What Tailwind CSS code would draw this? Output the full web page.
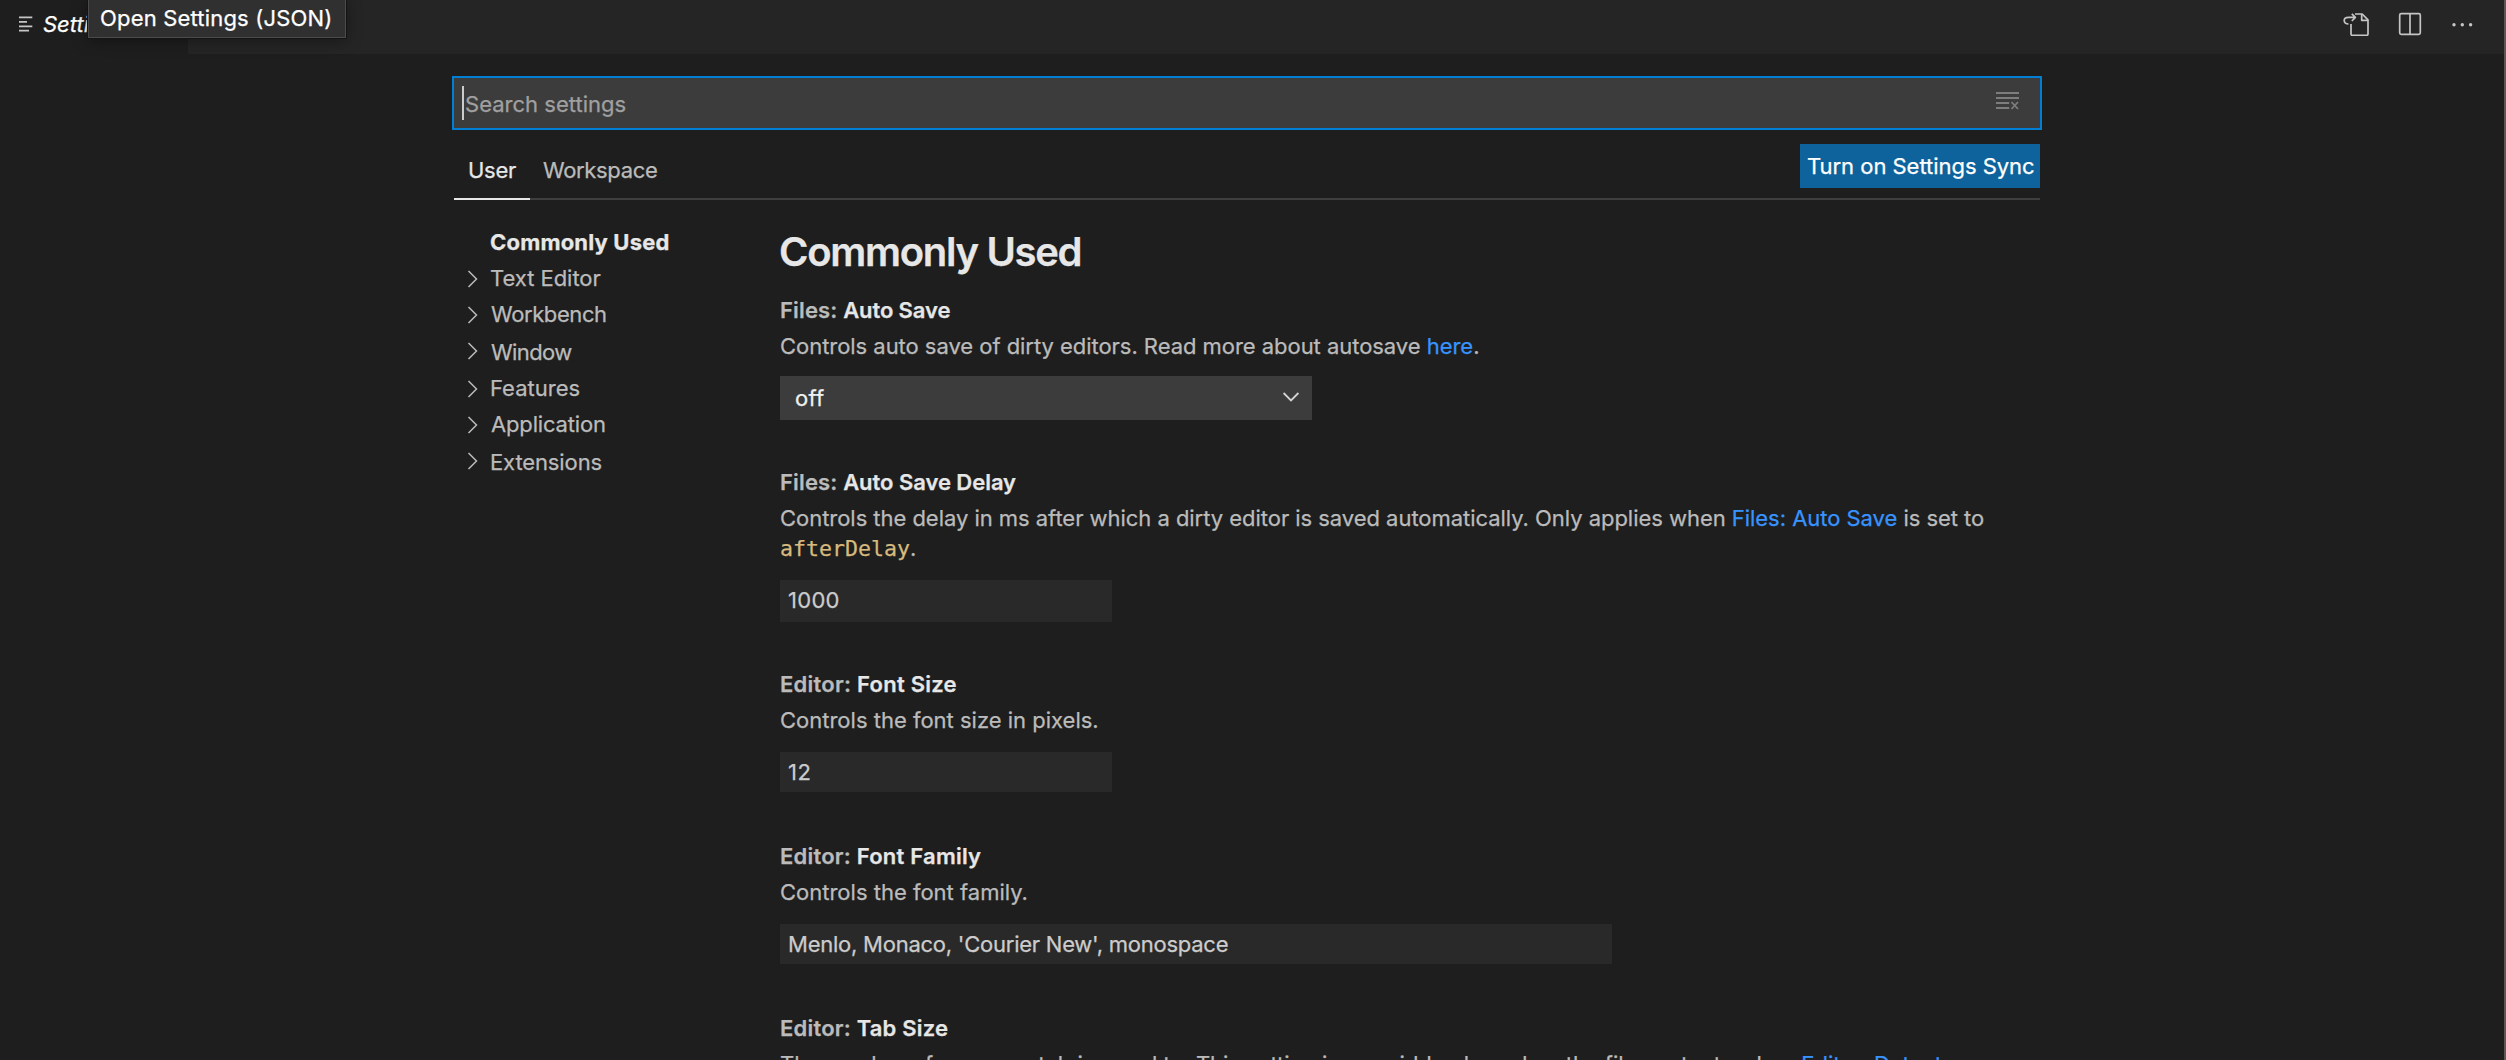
<!DOCTYPE html>
<html lang="en">
<head>
<meta charset="utf-8">
<title>Settings</title>
<script src="https://cdn.jsdelivr.net/npm/@tailwindcss/browser@4"></script>
</head>
<body class="relative flex h-[1060px] w-[2506px] flex-col overflow-hidden border-r-2 border-[#5a5955] bg-[#1e1e1e] font-['Inter',sans-serif] text-[22px] leading-9 text-[#bbbbbb] [-webkit-text-stroke:0.25px]">

<!-- Tab bar -->
<header class="flex h-[54px] shrink-0 justify-between bg-[#252526]">
  <div class="flex h-full w-[188px] items-center gap-[10px] bg-[#1e1e1e] pb-[6px] pl-[18px]">
    <svg class="h-4 w-[15px] shrink-0" viewBox="0 0 15 16" fill="none" stroke="#c5c5c5" stroke-width="1.8"><path d="M1 1.3h13.3M1 5.8h8M1 10.3h13.3M1 14.7h10"/></svg>
    <span class="text-white italic">Settings</span>
  </div>
  <div class="flex pr-[30px]">
    <svg class="mt-3 h-6 w-7" viewBox="0 0 28 24" fill="none" stroke="#c5c5c5" stroke-width="1.7" stroke-linejoin="round">
      <path d="M9 12v10q0 1.3 1.3 1.3h14.4q1.3 0 1.3-1.3V7.8l-5.8-5.8H13"/><path d="M19.700 2v6.300H26"/>
      <path d="M6.500 12C3.800 12 2.200 10.600 2.200 8.600S3.800 5.400 6.500 5.400h6.200M9.800 1.800l3.600 3.600-3.600 3.600"/>
    </svg>
    <svg class="mt-3 ml-7 h-6 w-6" viewBox="0 0 24 24" fill="none" stroke="#c5c5c5" stroke-width="1.7"><rect x="1.700" y="1.700" width="20.600" height="20.600" rx="1.500"/><path d="M12 2v20"/></svg>
    <svg class="mt-3 ml-7 h-6 w-6" viewBox="0 0 24 24" fill="#c5c5c5"><circle cx="4" cy="12.700" r="1.700"/><circle cx="12.300" cy="12.700" r="1.700"/><circle cx="20.600" cy="12.700" r="1.700"/></svg>
  </div>
</header>

<div class="absolute -top-px left-[88px] h-[39px] w-[258px] border border-[#4b4b4b] bg-[#303031] pl-[11px] leading-[37px] tracking-[0.18px] text-white shadow-[0_0_0_1px_#141414,0_2px_16px_rgba(0,0,0,0.4)]">Open Settings (JSON)</div>

<main class="ml-[452px] flex w-[1590px] flex-col pt-[22px]">
  <!-- Search -->
  <div class="flex h-[54px] items-center justify-between border-2 border-[#007fd4] bg-[#3c3c3c] pr-[21px] pl-2">
    <div class="flex items-center">
      <span class="h-[34px] w-[2px] bg-[#cccccc]"></span>
      <span class="pt-[2px] pl-px leading-[34px] tracking-[0.02px] text-[#a0a0a0]">Search settings</span>
    </div>
    <svg class="mb-1 h-5 w-6" viewBox="0 0 24 20" fill="none" stroke="#7d7d7d" stroke-width="1.800"><path d="M1 2h23M1 7h23M1 12h13.200M1 17h13.200M16.500 11l6.500 7M23 11l-6.500 7"/></svg>
  </div>

  <!-- Scope tabs -->
  <div class="mx-[2px] mt-[14px] flex h-[56px] justify-between border-b-2 border-[#3f3f3f]">
    <nav class="-mb-[2px] flex">
      <div class="h-[56px] w-[76px] border-b-2 border-[#e7e7e7] pt-2 pl-[14px] tracking-[-0.27px] text-[#e7e7e7]">User</div>
      <div class="pt-2 pl-[13px] tracking-[-0.34px]">Workspace</div>
    </nav>
    <div class="h-11 w-60 bg-[#0e639c] pl-[7px] leading-[44px] tracking-[-0.03px] whitespace-nowrap text-white">Turn on Settings Sync</div>
  </div>

  <div class="flex h-[860px] overflow-hidden">
    <!-- Contents tree -->
    <nav class="flex w-[328px] shrink-0 flex-col pt-6 pl-[15px]">
      <div class="flex h-9 pl-[23px] font-bold tracking-[0.18px] text-[#e7e7e7]">Commonly Used</div>
      <div class="flex h-9"><svg class="mt-[10px] mr-[11px] h-[18px] w-3" viewBox="0 0 12 18" fill="none" stroke="#bbbbbb" stroke-width="1.500"><path d="M1.500 1l8 8-8 8"/></svg><span class="tracking-[-0.03px]">Text Editor</span></div>
      <div class="flex h-9"><svg class="mt-[10px] mr-[11px] h-[18px] w-3" viewBox="0 0 12 18" fill="none" stroke="#bbbbbb" stroke-width="1.500"><path d="M1.500 1l8 8-8 8"/></svg><span class="pl-px tracking-[-0.4px]">Workbench</span></div>
      <div class="mt-[2px] flex h-9"><svg class="mt-2 mr-[11px] h-[18px] w-3" viewBox="0 0 12 18" fill="none" stroke="#bbbbbb" stroke-width="1.500"><path d="M1.500 1l8 8-8 8"/></svg><span class="pl-px tracking-[-0.6px]">Window</span></div>
      <div class="flex h-9"><svg class="mt-[10px] mr-[11px] h-[18px] w-3" viewBox="0 0 12 18" fill="none" stroke="#bbbbbb" stroke-width="1.500"><path d="M1.500 1l8 8-8 8"/></svg><span class="tracking-[0px]">Features</span></div>
      <div class="flex h-9"><svg class="mt-[10px] mr-[11px] h-[18px] w-3" viewBox="0 0 12 18" fill="none" stroke="#bbbbbb" stroke-width="1.500"><path d="M1.500 1l8 8-8 8"/></svg><span class="pl-px tracking-[-0.16px]">Application</span></div>
      <div class="mt-[2px] flex h-9"><svg class="mt-2 mr-[11px] h-[18px] w-3" viewBox="0 0 12 18" fill="none" stroke="#bbbbbb" stroke-width="1.500"><path d="M1.500 1l8 8-8 8"/></svg><span class="tracking-[-0.12px]">Extensions</span></div>
    </nav>

    <!-- Settings list -->
    <div class="flex w-[1260px] shrink-0 flex-col whitespace-nowrap pt-7">
      <h1 class="mb-4 -ml-px text-[40px] leading-[48px] font-semibold tracking-[-1.3px] text-[#e7e7e7]">Commonly Used</h1>

      <section class="mb-11">
        <h2 class="font-semibold"><span class="tracking-[0.15px]">Files: </span><span class="tracking-[-0.1px] text-[#e7e7e7]">Auto Save</span></h2>
        <p class="mt-[3px] leading-[30px] tracking-[-0.04px]">Controls auto save of dirty editors. Read more about autosave <a class="text-[#3794ff]">here</a>.</p>
        <div class="mt-[15px] flex h-11 w-[532px] items-center justify-between bg-[#3c3c3c] pr-3 pl-[15px] text-[#f0f0f0]">
          <span class="tracking-[0.26px]">off</span>
          <svg class="mb-[2px] h-[10px] w-[18px]" viewBox="0 0 18 10" fill="none" stroke="#d4d4d4" stroke-width="1.800"><path d="M1.600 1l7.400 7.400L16.400 1"/></svg>
        </div>
      </section>

      <section class="mb-11">
        <h2 class="font-semibold"><span class="tracking-[0.15px]">Files: </span><span class="tracking-[-0.04px] text-[#e7e7e7]">Auto Save Delay</span></h2>
        <p class="mt-[3px] leading-[30px] tracking-[-0.038px]">Controls the delay in ms after which a dirty editor is saved automatically. Only applies when <a class="text-[#3794ff]">Files: Auto Save</a> is set to<br><code class="font-['DejaVu_Sans_Mono',monospace] text-[21.6px] leading-none tracking-normal text-[#d7ba7d]">afterDelay</code>.</p>
        <div class="mt-[17px] h-[42px] w-[332px] bg-[#292929] pl-2 leading-10 tracking-[0.3px] text-[#cccccc]">1000</div>
      </section>

      <section class="mb-[46px]">
        <h2 class="font-semibold tracking-[0.25px]">Editor: <span class="text-[#e7e7e7]">Font Size</span></h2>
        <p class="mt-[3px] leading-[30px]">Controls the font size in pixels.</p>
        <div class="mt-[17px] h-10 w-[332px] bg-[#292929] pl-2 leading-10 tracking-[0.5px] text-[#cccccc]">12</div>
      </section>

      <section class="mb-[46px]">
        <h2 class="font-semibold tracking-[0.22px]">Editor: <span class="text-[#e7e7e7]">Font Family</span></h2>
        <p class="mt-[3px] leading-[30px]">Controls the font family.</p>
        <div class="mt-[17px] h-10 w-[832px] bg-[#292929] pl-2 leading-10 tracking-[-0.24px] text-[#cccccc]">Menlo, Monaco, 'Courier New', monospace</div>
      </section>

      <section>
        <h2 class="font-semibold tracking-[0.2px]">Editor: <span class="text-[#e7e7e7]">Tab Size</span></h2>
        <p class="mt-[3px] leading-[30px] tracking-[-0.04px]">The number of spaces a tab is equal to. This setting is overridden based on the file contents when <a class="text-[#3794ff]">Editor: Detect</a></p>
      </section>
    </div>
  </div>
</main>
</body>
</html>
